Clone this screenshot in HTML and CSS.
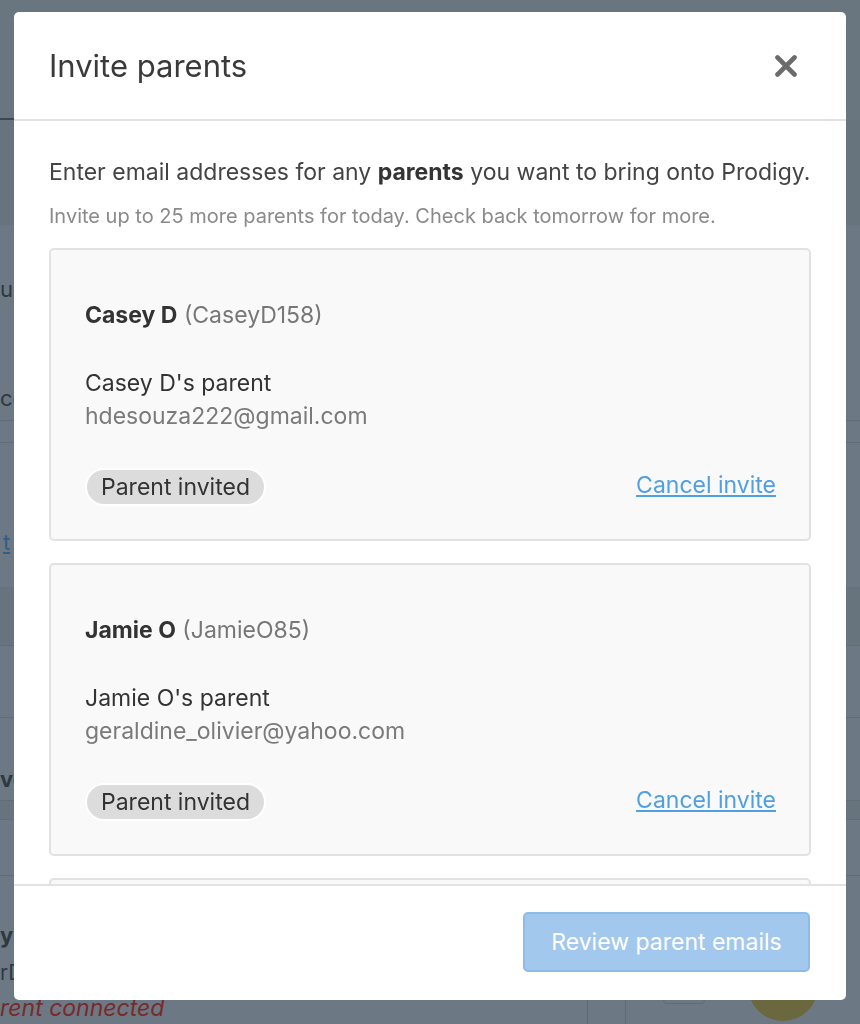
FILE: index.html
```html
<!DOCTYPE html>
<html lang="en">
<head>
<meta charset="utf-8">
<title>Invite parents</title>
<link rel="stylesheet" href="styles.css">
</head>
<body>
<div class="page">
  <div class="bg-head"><span class="tab-line"></span></div>
  <div class="bg-band"></div>
  <div class="bg-row r1"><span class="frag">ud</span></div>
  <div class="bg-row r2"><span class="frag">cc</span></div>
  <div class="bg-row r4"><span class="frag link">t</span></div>
  <div class="bg-row r5"></div>
  <div class="bg-row r6"></div>
  <div class="bg-row r7"><span class="frag bold">ve</span></div>
  <div class="bg-row r8"></div>
  <div class="bg-row r9"></div>
  <div class="bg-row r10">
    <div class="bg-left">
      <span class="frag bold">y</span>
      <span class="frag small">rD</span>
      <span class="frag red">rent connected</span>
    </div>
    <div class="bg-cols">
      <span class="col-line"></span>
      <span class="col-line"></span>
      <span class="mini-box"></span>
      <span class="avatar"></span>
    </div>
  </div>
</div>

<div class="modal">
  <header class="modal-header">
    <h1 class="modal-title">Invite parents</h1>
    <button class="close" aria-label="Close">
      <svg width="24" height="24" viewBox="0 0 24 24"><path d="M3.5 3.5 L20.5 20.5 M20.5 3.5 L3.5 20.5" stroke="#6b6b6b" stroke-width="4.6" stroke-linecap="round"/></svg>
    </button>
  </header>
  <div class="modal-body">
    <p class="intro">Enter email addresses for any <strong>parents</strong> you want to bring onto Prodigy.</p>
    <p class="sub">Invite up to 25 more parents for today. Check back tomorrow for more.</p>
    <div class="cards">
      <div class="card">
        <div class="student"><strong>Casey D</strong> <span class="user">(CaseyD158)</span></div>
        <div class="parent">Casey D's parent</div>
        <div class="email">hdesouza222@gmail.com</div>
        <div class="card-foot">
          <span class="badge">Parent invited</span>
          <a class="cancel" href="#">Cancel invite</a>
        </div>
      </div>
      <div class="card">
        <div class="student"><strong>Jamie O</strong> <span class="user">(JamieO85)</span></div>
        <div class="parent">Jamie O's parent</div>
        <div class="email">geraldine_olivier@yahoo.com</div>
        <div class="card-foot">
          <span class="badge">Parent invited</span>
          <a class="cancel" href="#">Cancel invite</a>
        </div>
      </div>
      <div class="card">
        <div class="student"><strong>Lily D</strong> <span class="user">(LilyD12)</span></div>
      </div>
    </div>
  </div>
  <footer class="modal-footer">
    <button class="primary" disabled>Review parent emails</button>
  </footer>
</div>
</body>
</html>
```

FILE: styles.css
```css
* { box-sizing: border-box; }
html, body { margin: 0; padding: 0; }
body {
  width: 860px;
  height: 1024px;
  overflow: hidden;
  background: #6c7883;
  font-family: Inter, "Open Sans", "Liberation Sans", sans-serif;
}

/* dimmed page behind the modal */
.page { display: flex; flex-direction: column; height: 1024px; }
.bg-head { height: 125px; background: #69757f; display: flex; align-items: flex-end; }
.tab-line { display: block; width: 40px; height: 3px; background: #3d4852; margin-bottom: -1px; }
.bg-band { height: 110px; background: #67737d; }
.bg-row { display: flex; align-items: center; border-bottom: 1px solid #606c76; background: #6c7883; }
.frag { font-size: 22px; line-height: 26px; color: #2e3942; white-space: nowrap; }
.frag.link { color: #2e5f8a; text-decoration: underline; padding-left: 3px; }
.frag.bold { font-weight: 700; }
.r1 { height: 202px; align-items: flex-start; padding-top: 51px; border-bottom: 1px solid #5f6b75; }
.r2 { height: 23px; }
.r2 .frag { margin-top: -68px; }
.r4 { height: 150px; align-items: flex-end; padding-bottom: 32px; border-bottom-color: #66727c; }
.r5 { height: 60px; background: #67737d; }
.r6 { height: 75px; }
.r7 { height: 85px; padding-top: 40px; }
.r8 { height: 20px; background: #67737d; }
.r9 { height: 58px; }
.r10 { flex: 1; border-bottom: 0; align-items: stretch; }
.bg-left { width: 587px; display: flex; flex-direction: column; padding-top: 40px; }
.bg-left .frag { line-height: 38px; }
.frag.small { font-size: 21px; font-weight: 400; color: #2f3a44; }
.frag.red { color: #7a2a2a; font-style: italic; font-size: 23px; line-height: 32px; }
.bg-cols { flex: 1; display: flex; align-items: flex-end; }
.col-line { width: 1px; height: 100%; background: #5f6b75; margin-right: 37px; }
.mini-box { width: 42px; height: 30px; border: 1px solid #5e6a74; border-radius: 4px; margin-bottom: 20px; }
.avatar { width: 70px; height: 70px; border-radius: 50%; background: #6b683f; margin-left: 43px; margin-bottom: 3px; }

/* modal */
.modal {
  position: fixed;
  left: 14px;
  top: 12px;
  width: 832px;
  height: 988px;
  background: #fff;
  border-radius: 5px;
  display: flex;
  flex-direction: column;
  overflow: hidden;
  color: #444;
}
.modal-header {
  height: 109px;
  flex: none;
  display: flex;
  align-items: center;
  justify-content: space-between;
  padding: 0 48px 0 35px;
  border-bottom: 2px solid #e2e2e2;
}
.modal-title { margin: 0; font-size: 31px; font-weight: 400; color: #3a3a3a; }
.close { border: 0; background: none; padding: 0; width: 24px; height: 24px; display: flex; }

.modal-body { flex: 1; overflow: hidden; padding: 37px 35px 0 35px; }
.intro { margin: 0; font-size: 23px; line-height: 28px; color: #444; white-space: nowrap; }
.intro strong { font-weight: 700; color: #333; }
.sub { margin: 17px 0 0 0; font-size: 20px; line-height: 26px; color: #8a8a8a; white-space: nowrap; }
.cards { margin-top: 19px; display: flex; flex-direction: column; gap: 22px; }
.card {
  background: #f9f9f9;
  border: 2px solid #e2e2e2;
  border-radius: 5px;
  padding: 51px 33px 33px 34px;
}
.student { font-size: 23px; line-height: 28px; color: #333; }
.student strong { font-weight: 700; }
.user { color: #777; }
.parent { margin-top: 38px; font-size: 23px; line-height: 33px; color: #333; }
.email { font-size: 23px; line-height: 33px; color: #7a7a7a; }
.card-foot { margin-top: 35px; display: flex; align-items: center; justify-content: space-between; }
.badge {
  display: inline-block;
  background: #dcdcdc;
  border: 2px solid #fff;
  border-radius: 20px;
  padding: 0 14px;
  height: 38px;
  line-height: 34px;
  font-size: 23px;
  color: #333;
}
.cancel { font-size: 23px; color: #4f9fe3; text-decoration: underline; margin-top: -4px; }

.modal-footer {
  height: 116px;
  flex: none;
  border-top: 2px solid #e2e2e2;
  display: flex;
  align-items: center;
  justify-content: flex-end;
  padding: 0 36px 2px 0;
}
.primary {
  width: 287px;
  height: 60px;
  background: #a3c8ed;
  border: 2px solid #8fbbe8;
  border-radius: 5px;
  color: #fff;
  font-family: inherit;
  font-size: 23px;
}
```
